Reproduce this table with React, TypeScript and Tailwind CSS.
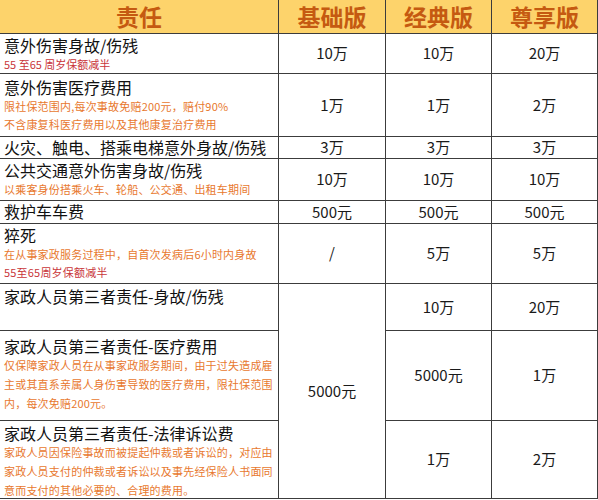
import React from "react";

const font = { fontFamily: '"Noto Sans CJK SC", "Noto Sans", sans-serif' };

const B = "border-r border-b border-[#3c3c3c]";
const RED = "text-[#c9363a]";
const ORG = "text-[#e8782e]";

function V({ children, span }: { children: React.ReactNode; span?: boolean }) {
  return (
    <div
      className={`${B} flex items-center justify-center text-[15px] text-[#1a1a1a] ${span ? "row-span-3" : ""}`}
    >
      {children}
    </div>
  );
}

function H({ children }: { children: React.ReactNode }) {
  return (
    <div className={`${B} flex items-center justify-center text-[23px] font-bold text-[#c55a11] bg-[#fdd36b]`}>
      {children}
    </div>
  );
}

export default function App() {
  return (
    <div className="w-[598px] h-[500px] bg-white" style={font}>
      <div className="grid grid-cols-[279px_107px_106px_106px] grid-rows-[34px_40px_63px_22px_42px_23px_60px_47px_90px_78px]">
        <H>责任</H>
        <H>基础版</H>
        <H>经典版</H>
        <H>尊享版</H>

        <div className={`${B} pl-[4px] pt-[1px]`}>
          <div className="text-[16px] leading-[20px] text-[#111]">意外伤害身故/伤残</div>
          <div className={`text-[11px] leading-[18px] ${RED}`}>55 至65 周岁保额减半</div>
        </div>
        <V>10万</V>
        <V>10万</V>
        <V>20万</V>

        <div className={`${B} pl-[4px] pt-[3px]`}>
          <div className="text-[16px] leading-[20px] text-[#111]">意外伤害医疗费用</div>
          <div className={`text-[11px] leading-[18px] whitespace-nowrap tracking-[0.2px] ${ORG}`}>限社保范围内,每次事故免赔200元，赔付90%</div>
          <div className={`text-[11px] leading-[18px] whitespace-nowrap tracking-[0.2px] ${ORG}`}>不含康复科医疗费用以及其他康复治疗费用</div>
        </div>
        <V>1万</V>
        <V>1万</V>
        <V>2万</V>

        <div className={`${B} pl-[4px]`}>
          <div className="text-[16px] leading-[20px] text-[#111] whitespace-nowrap">火灾、触电、搭乘电梯意外身故/伤残</div>
        </div>
        <V>3万</V>
        <V>3万</V>
        <V>3万</V>

        <div className={`${B} pl-[4px] pt-[1px]`}>
          <div className="text-[16px] leading-[20px] text-[#111]">公共交通意外伤害身故/伤残</div>
          <div className={`text-[11px] leading-[18px] whitespace-nowrap tracking-[0.2px] ${ORG}`}>以乘客身份搭乘火车、轮船、公交通、出租车期间</div>
        </div>
        <V>10万</V>
        <V>10万</V>
        <V>10万</V>

        <div className={`${B} pl-[4px]`}>
          <div className="text-[16px] leading-[21px] text-[#111]">救护车车费</div>
        </div>
        <V>500元</V>
        <V>500元</V>
        <V>500元</V>

        <div className={`${B} pl-[4px] pt-[1px]`}>
          <div className="text-[16px] leading-[20px] text-[#111]">猝死</div>
          <div className={`text-[11px] leading-[18px] whitespace-nowrap tracking-[0.2px] ${ORG}`}>在从事家政服务过程中，自首次发病后6小时内身故</div>
          <div className={`text-[11px] leading-[18px] whitespace-nowrap tracking-[0.2px] ${RED}`}>55至65周岁保额减半</div>
        </div>
        <V>/</V>
        <V>5万</V>
        <V>5万</V>

        <div className={`${B} pl-[4px] pt-[2px]`}>
          <div className="text-[16px] leading-[20px] text-[#111]">家政人员第三者责任-身故/伤残</div>
        </div>
        <V span>5000元</V>
        <V>10万</V>
        <V>20万</V>

        <div className={`${B} pl-[4px] pr-[4px] pt-[5px]`}>
          <div className="text-[16px] leading-[20px] text-[#111]">家政人员第三者责任-医疗费用</div>
          <div className={`text-[11px] leading-[19px] tracking-[0.2px] ${ORG}`}>
            仅保障家政人员在从事家政服务期间，由于过失造成雇主或其直系亲属人身伤害导致的医疗费用，限社保范围内，每次免赔200元。
          </div>
        </div>
        <V>5000元</V>
        <V>1万</V>

        <div className={`${B} pl-[4px] pr-[4px] pt-[2px]`}>
          <div className="text-[16px] leading-[20px] text-[#111]">家政人员第三者责任-法律诉讼费</div>
          <div className={`text-[11px] leading-[19px] tracking-[0.2px] ${ORG}`}>
            家政人员因保险事故而被提起仲裁或者诉讼的，对应由家政人员支付的仲裁或者诉讼以及事先经保险人书面同意而支付的其他必要的、合理的费用。
          </div>
        </div>
        <V>1万</V>
        <V>2万</V>
      </div>
    </div>
  );
}
